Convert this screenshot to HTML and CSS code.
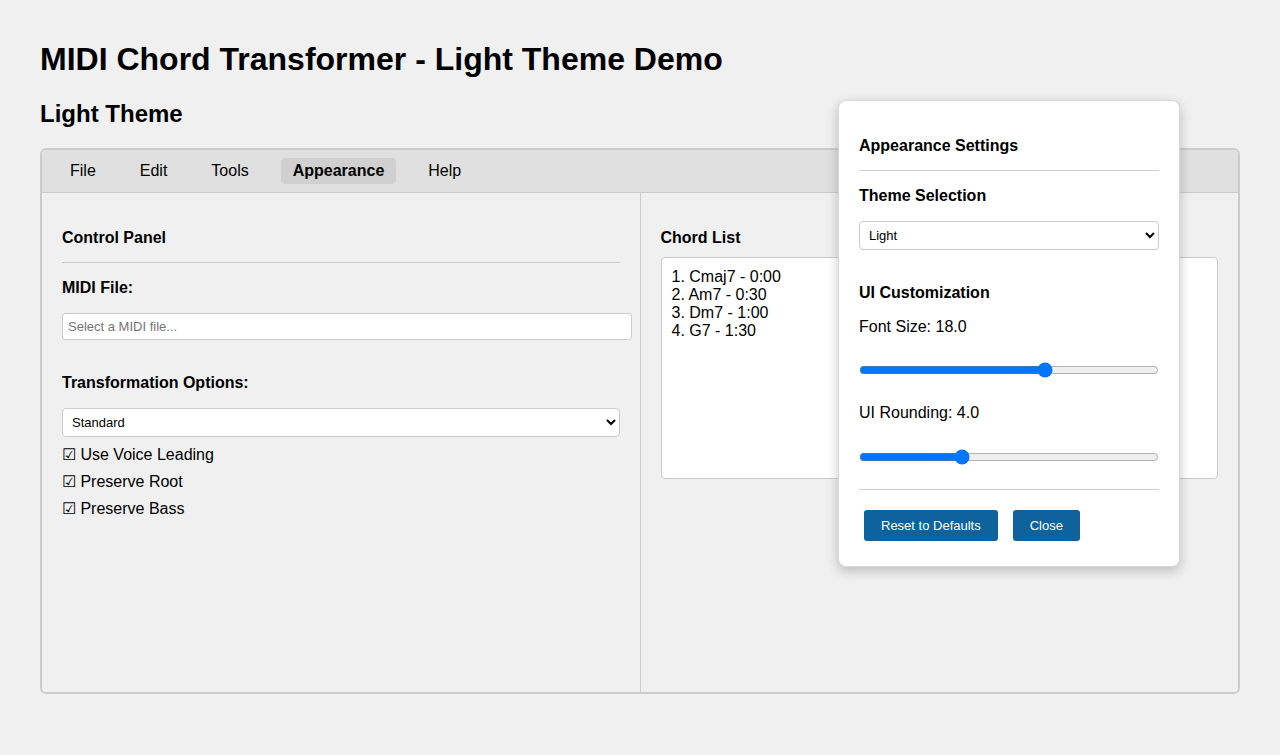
FILE: index.html
```html
<!DOCTYPE html>
<html lang="en">
<head>
<meta charset="utf-8">
<title>MIDI Chord Transformer - Light Theme Demo</title>
<link rel="stylesheet" href="styles.css">
</head>
<body>
<div class="page">
  <h1 class="title">MIDI Chord Transformer - Light Theme Demo</h1>
  <h2 class="subtitle">Light Theme</h2>
  <div class="app">
    <div class="menubar">
      <span class="menu-item">File</span>
      <span class="menu-item">Edit</span>
      <span class="menu-item">Tools</span>
      <span class="menu-item active">Appearance</span>
      <span class="menu-item">Help</span>
    </div>
    <div class="panels">
      <div class="panel left">
        <h3 class="panel-title">Control Panel</h3>
        <hr class="sep">
        <div class="field-label">MIDI File:</div>
        <input class="text-input" type="text" placeholder="Select a MIDI file...">
        <div class="field-label options-label">Transformation Options:</div>
        <select class="select">
          <option>Standard</option>
        </select>
        <div class="checks">
          <div class="check">☑ Use Voice Leading</div>
          <div class="check">☑ Preserve Root</div>
          <div class="check">☑ Preserve Bass</div>
        </div>
      </div>
      <div class="panel right">
        <h3 class="panel-title chord-title">Chord List</h3>
        <div class="chord-box">
          <div>1. Cmaj7 - 0:00</div>
          <div>2. Am7 - 0:30</div>
          <div>3. Dm7 - 1:00</div>
          <div>4. G7 - 1:30</div>
        </div>
      </div>
    </div>
  </div>

  <div class="dialog">
    <h3 class="dlg-title">Appearance Settings</h3>
    <hr class="sep dlg-sep">
    <h3 class="dlg-section">Theme Selection</h3>
    <select class="select dlg-select">
      <option>Light</option>
    </select>
    <h3 class="dlg-section ui-section">UI Customization</h3>
    <div class="dlg-label">Font Size: 18.0</div>
    <input class="slider" type="range" min="8" max="24" step="0.5" value="18">
    <div class="dlg-label second">UI Rounding: 4.0</div>
    <input class="slider slider-second" type="range" min="0" max="12" step="0.5" value="4">
    <hr class="sep bottom-sep">
    <div class="buttons">
      <button class="btn">Reset to Defaults</button>
      <button class="btn">Close</button>
    </div>
  </div>
</div>
</body>
</html>
```

FILE: styles.css
```css
html, body {
  margin: 0;
  padding: 0;
  background: #f0f0f0;
  font-family: "Liberation Sans", Arial, sans-serif;
  color: #000;
}

.page {
  position: relative;
  padding: 41px 40px 40px;
  min-height: 755px;
  box-sizing: border-box;
}

.title {
  margin: 0;
  font-size: 32px;
  line-height: 37px;
  font-weight: bold;
}

.subtitle {
  margin: 22px 0 0;
  font-size: 24px;
  line-height: 28px;
  font-weight: bold;
}

.app {
  margin-top: 20px;
  border: 2px solid #cccccc;
  border-radius: 6px;
  overflow: hidden;
  background: #f0f0f0;
}

.menubar {
  display: flex;
  gap: 20px;
  padding: 8px 16px;
  background: #e0e0e0;
  border-bottom: 1px solid #cccccc;
}

.menu-item {
  padding: 4px 12px;
  font-size: 16px;
  line-height: 18px;
  border-radius: 4px;
}

.menu-item.active {
  background: #d0d0d0;
  font-weight: bold;
}

.panels {
  display: flex;
  height: 499px;
}

.panel {
  flex: 1 1 0;
  padding: 20px;
  display: flex;
  flex-direction: column;
  align-items: stretch;
  min-width: 0;
}

.panel.left {
  border-right: 1px solid #cccccc;
}

.panel-title {
  margin: 16px 0 15px;
  font-size: 16px;
  line-height: 18px;
  font-weight: bold;
}

.sep {
  margin: 0;
  border: 0;
  border-top: 1px solid #cccccc;
  height: 0;
}

.field-label {
  margin-top: 16px;
  font-size: 16px;
  line-height: 18px;
  font-weight: bold;
}

.options-label {
  margin-top: 34px;
}

.text-input {
  margin-top: 16px;
  width: 100%;
  padding: 5px;
  border: 1px solid #cccccc;
  border-radius: 3px;
  font-family: "Liberation Sans", Arial, sans-serif;
  font-size: 13px;
  line-height: 15px;
  height: 15px;
  background: #fff;
  align-self: flex-start;
}

.text-input::placeholder {
  color: #757575;
}

.select {
  margin-top: 16px;
  height: 29px;
  box-sizing: border-box;
  padding: 0 5px;
  border: 1px solid #cccccc;
  border-radius: 4px;
  background: #fff;
  font-family: "Liberation Sans", Arial, sans-serif;
  font-size: 13px;
  color: #000;
  width: 100%;
}

.checks {
  display: flex;
  flex-direction: column;
  gap: 9px;
  margin-top: 9px;
}

.check {
  font-size: 16px;
  line-height: 18px;
}

.chord-title {
  margin-bottom: 10px;
}

.chord-box {
  height: 222px;
  box-sizing: border-box;
  padding: 10px 10px;
  background: #fff;
  border: 1px solid #cccccc;
  border-radius: 4px;
  font-size: 16px;
  line-height: 18px;
}

.dialog {
  position: absolute;
  left: 838px;
  top: 100px;
  width: 300px;
  padding: 20px;
  background: #fff;
  border: 1px solid #d8d8d8;
  border-radius: 8px;
  box-shadow: 0 4px 12px rgba(0, 0, 0, 0.22);
  display: flex;
  flex-direction: column;
}

.dlg-title {
  margin: 16px 0 15px;
  font-size: 16px;
  line-height: 18px;
  font-weight: bold;
}

.dlg-section {
  margin: 16px 0 0;
  font-size: 16px;
  line-height: 18px;
  font-weight: bold;
}

.ui-section {
  margin-top: 34px;
}

.dlg-select {
  margin-top: 16px;
}

.dlg-label {
  margin-top: 16px;
  font-size: 16px;
  line-height: 18px;
}

.dlg-label.second {
  margin-top: 26px;
}

.slider {
  display: block;
  margin: 26px 0 0;
  width: 100%;
  height: 16px;
}

.slider.slider-second {
  margin-top: 27px;
}

.bottom-sep {
  margin-top: 24px;
}

.buttons {
  display: flex;
  gap: 5px;
  margin-top: 15px;
}

.btn {
  margin: 5px;
  padding: 8px 17px;
  border: 0;
  border-radius: 3px;
  background: #0e639c;
  color: #fff;
  font-family: "Liberation Sans", Arial, sans-serif;
  font-size: 13px;
  line-height: 15px;
}
```
